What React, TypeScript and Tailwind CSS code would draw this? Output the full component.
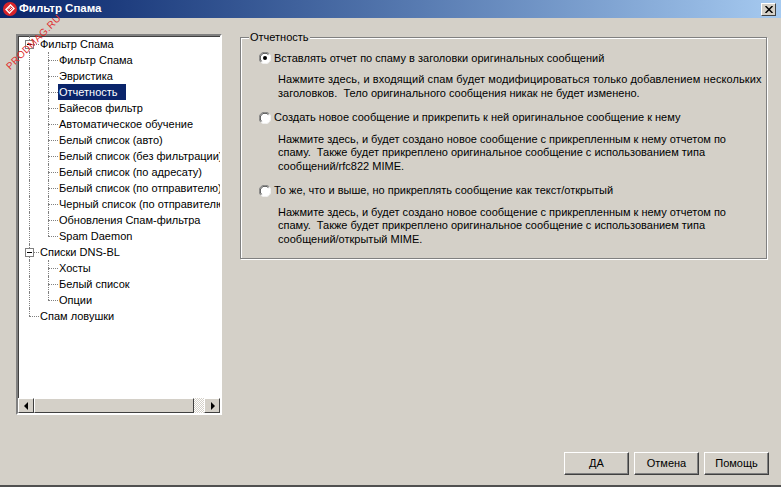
const rows: { label: string; level: 0 | 1; last?: boolean; box?: boolean; selected?: boolean }[] = [
  { label: "Фильтр Спама", level: 0, box: true },
  { label: "Фильтр Спама", level: 1 },
  { label: "Эвристика", level: 1 },
  { label: "Отчетность", level: 1, selected: true },
  { label: "Байесов фильтр", level: 1 },
  { label: "Автоматическое обучение", level: 1 },
  { label: "Белый список (авто)", level: 1 },
  { label: "Белый список (без фильтрации)", level: 1 },
  { label: "Белый список (по адресату)", level: 1 },
  { label: "Белый список (по отправителю)", level: 1 },
  { label: "Черный список (по отправителю)", level: 1 },
  { label: "Обновления Спам-фильтра", level: 1 },
  { label: "Spam Daemon", level: 1, last: true },
  { label: "Списки DNS-BL", level: 0, box: true },
  { label: "Хосты", level: 1 },
  { label: "Белый список", level: 1 },
  { label: "Опции", level: 1, last: true },
  { label: "Спам ловушки", level: 0, last: true },
];

const options = [
  {
    label: "Вставлять отчет по спаму в заголовки оригинальных сообщений",
    checked: true,
    lines: [
      "Нажмите здесь, и входящий спам будет модифицироваться только добавлением нескольких",
      "заголовков.  Тело оригинального сообщения никак не будет изменено.",
    ],
  },
  {
    label: "Создать новое сообщение и прикрепить к ней оригинальное сообщение к нему",
    lines: [
      "Нажмите здесь, и будет создано новое сообщение с прикрепленным к нему отчетом по",
      "спаму.  Также будет прикреплено оригинальное сообщение с использованием типа",
      "сообщений/rfc822 MIME.",
    ],
  },
  {
    label: "То же, что и выше, но прикреплять сообщение как текст/открытый",
    lines: [
      "Нажмите здесь, и будет создано новое сообщение с прикрепленным к нему отчетом по",
      "спаму.  Также будет прикреплено оригинальное сообщение с использованием типа",
      "сообщений/открытый MIME.",
    ],
  },
];

function Elbow(props: { last?: boolean; box?: boolean; width: string }) {
  return (
    <div className={`relative h-4 flex-shrink-0 ${props.width}`}>
      <div className={`border-l border-dotted border-[#808080] ${props.last ? "h-2" : "h-4"}`} />
      <div className="absolute left-0 right-0 top-2 border-t border-dotted border-[#808080]" />
      {props.box && (
        <div className="absolute left-[-4px] top-[4px] w-[9px] h-[9px] border border-[#808080] bg-white flex items-center justify-center">
          <div className="w-[5px] h-px bg-black" />
        </div>
      )}
    </div>
  );
}

function TreeRow(props: { row: (typeof rows)[number] }) {
  const { row } = props;
  return (
    <div className="flex h-4 items-center whitespace-nowrap">
      {row.level === 1 && (
        <>
          <div className="h-4 w-[19px] flex-shrink-0 border-l border-dotted border-[#808080]" />
          <Elbow width="w-[10px]" last={row.last} />
        </>
      )}
      {row.level === 0 && <Elbow width="w-[10px]" last={row.last} box={row.box} />}
      <span className={`h-4 pl-px leading-4 ${row.selected ? "pr-[8px] bg-[#0a246a] text-white" : "pr-px text-black"}`}>{row.label}</span>
    </div>
  );
}

function Arrow(props: { left?: boolean }) {
  return (
    <div className="w-4 h-[15px] bg-[#d4d0c8] border-t border-l border-white border-r border-b border-r-[#404040] border-b-[#404040] flex items-center justify-center flex-shrink-0">
      <svg width="5" height="8" viewBox="0 0 5 8">
        <path d={props.left ? "M4 0 L0 4 L4 8 Z" : "M1 0 L5 4 L1 8 Z"} fill="#000" />
      </svg>
    </div>
  );
}

function Radio(props: { checked?: boolean }) {
  return (
    <svg width="12" height="12" viewBox="0 0 12 12" className="flex-shrink-0">
      <circle cx="6" cy="6" r="5.5" fill="#fff" />
      <path d="M1.8 10.2 A5.5 5.5 0 0 1 10.2 1.8" fill="none" stroke="#808080" />
      <path d="M2.6 9.4 A4.5 4.5 0 0 1 9.4 2.6" fill="none" stroke="#404040" />
      <path d="M1.8 10.2 A5.5 5.5 0 0 0 10.2 1.8" fill="none" stroke="#f4f4f4" />
      {props.checked && <circle cx="6" cy="6" r="2" fill="#000" />}
    </svg>
  );
}

function DialogButton(props: { label: string }) {
  return (
    <button className="w-[65px] h-[23px] bg-[#d4d0c8] text-black border border-t-white border-l-white border-r-[#404040] border-b-[#404040] shadow-[inset_-1px_-1px_0_#808080]">
      {props.label}
    </button>
  );
}

export default function App() {
  return (
    <div className="w-[781px] h-[487px] flex flex-col bg-[#d4d0c8] text-[11px] overflow-hidden border-b-2 border-b-[#505050] font-['Liberation_Sans',sans-serif]">
      <div className="h-[18px] flex-shrink-0 flex items-center pl-[3px] pr-[5px] bg-gradient-to-r from-[#0a246a] to-[#a6caf0]">
        <svg width="14" height="14" viewBox="0 0 14 14" className="flex-shrink-0">
          <circle cx="7" cy="7" r="7" fill="#d8232a" />
          <path d="M3 7.5 L7.5 3 L11 6.5 L6.5 11 Z" fill="none" stroke="#fff" strokeWidth="1.4" />
          <path d="M5 7.5 L7.5 5 M6.5 8.5 L9 6" stroke="#fff" />
        </svg>
        <span className="ml-[2px] font-bold text-white text-[11.5px]">Фильтр Спама</span>
        <div className="ml-auto w-[15px] h-[13px] bg-[#d4d0c8] border border-t-white border-l-white border-r-[#404040] border-b-[#404040] flex items-center justify-center">
          <svg width="8" height="7" viewBox="0 0 8 7">
            <path d="M0.5 0 L7.5 7 M7.5 0 L0.5 7" stroke="#000" strokeWidth="1.5" />
          </svg>
        </div>
      </div>

      <div className="flex items-start pl-4 flex-1 min-h-0">
        <div className="relative mt-4 w-[206px] h-[381px] flex-shrink-0 flex flex-col bg-white border-2 border-t-[#808080] border-l-[#808080] border-r-white border-b-white shadow-[inset_1px_1px_0_#404040]">
          <div className="flex-1 min-h-0 overflow-hidden pl-[11px]">
            {rows.map((row, i) => (
              <TreeRow key={i} row={row} />
            ))}
          </div>
          <div className="flex h-[15px] flex-shrink-0">
            <Arrow left />
            <div className="w-[160px] h-[15px] bg-[#d4d0c8] border border-t-white border-l-white border-r-[#404040] border-b-[#404040]" />
            <div className="flex-1 bg-[repeating-conic-gradient(#d4d0c8_0_25%,#ffffff_0_50%)] bg-[length:2px_2px]" />
            <Arrow />
          </div>
          <span className="absolute left-[-22px] top-[-4px] w-[80px] origin-center -rotate-45 text-[#e03030] text-[10px] tracking-[0.4px] whitespace-nowrap">
            PRODMAG.RU
          </span>
        </div>

        <fieldset className="ml-[18px] mt-[13px] w-[527px] h-[228px] border border-[#808080] shadow-[inset_1px_1px_0_#fff,1px_1px_0_#fff] pl-[18px]">
          <legend className="ml-[-10px] px-px bg-[#d4d0c8] text-black leading-[13px]">Отчетность</legend>
          <div className="flex flex-col gap-[10.5px] pt-[7px]">
            {options.map((opt) => (
              <div key={opt.label}>
                <div className="flex items-center gap-[3px] h-[14px] text-black whitespace-nowrap">
                  <Radio checked={opt.checked} />
                  <span>{opt.label}</span>
                </div>
                <div className="mt-[8px] ml-[19px] leading-[13.5px] text-black whitespace-pre">
                  {opt.lines.map((line) => (
                    <div key={line} className={opt.checked && line.endsWith("нескольких") ? "tracking-[0.1px]" : ""}>
                      {line}
                    </div>
                  ))}
                </div>
              </div>
            ))}
          </div>
        </fieldset>
      </div>

      <div className="flex justify-end gap-[5px] pr-3 pb-[10px] flex-shrink-0">
        <DialogButton label="ДА" />
        <DialogButton label="Отмена" />
        <DialogButton label="Помощь" />
      </div>
    </div>
  );
}
